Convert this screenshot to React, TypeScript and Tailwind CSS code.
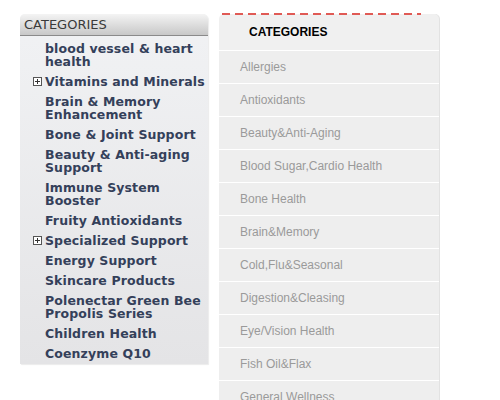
import React from "react";

const leftItems: { label: string; plus?: boolean }[] = [
  { label: "blood vessel & heart health" },
  { label: "Vitamins and Minerals", plus: true },
  { label: "Brain & Memory Enhancement" },
  { label: "Bone & Joint Support" },
  { label: "Beauty & Anti-aging Support" },
  { label: "Immune System Booster" },
  { label: "Fruity Antioxidants" },
  { label: "Specialized Support", plus: true },
  { label: "Energy Support" },
  { label: "Skincare Products" },
  { label: "Polenectar Green Bee Propolis Series" },
  { label: "Children Health" },
  { label: "Coenzyme Q10" },
];

const rightItems = [
  "Allergies",
  "Antioxidants",
  "Beauty&Anti-Aging",
  "Blood Sugar,Cardio Health",
  "Bone Health",
  "Brain&Memory",
  "Cold,Flu&Seasonal",
  "Digestion&Cleasing",
  "Eye/Vision Health",
  "Fish Oil&Flax",
  "General Wellness",
];

function PlusBox() {
  return (
    <svg width="9" height="9" viewBox="0 0 9 9" className="block">
      <rect x="0.5" y="0.5" width="8" height="8" fill="#fff" stroke="#555" />
      <line x1="2" y1="4.5" x2="7" y2="4.5" stroke="#333" />
      <line x1="4.5" y1="2" x2="4.5" y2="7" stroke="#333" />
    </svg>
  );
}

export default function App() {
  return (
    <div className="w-[500px] h-[400px] bg-white overflow-hidden relative">
      <div className="flex items-start pt-[14px]">
        {/* Left panel */}
        <div className="ml-[20px] w-[188px] rounded-t-[5px] bg-gradient-to-b from-[#f1f2f4] to-[#e4e4e6] shadow-[1px_1px_1px_rgba(0,0,0,0.08)] pb-[1px]">
          <div className="h-[22px] rounded-t-[5px] bg-gradient-to-b from-[#f4f4f4] to-[#c8c8c8] border-b border-[#8a8a8a] flex items-center pl-[4px]">
            <span className="text-[13px] leading-none text-[#3a3a3a] [font-family:'DejaVu_Sans',Tahoma,sans-serif]">
              CATEGORIES
            </span>
          </div>
          <ul className="pt-[2px]">
            {leftItems.map((it) => (
              <li key={it.label} className="flex items-start pt-[4px] pb-[3px]">
                <div className="w-[25px] shrink-0 flex justify-end pr-[3px] pt-[2px]">
                  {it.plus ? <PlusBox /> : null}
                </div>
                <span className="text-[12.5px] leading-[13px] font-bold text-[#34405a] [font-family:'DejaVu_Sans',Verdana,sans-serif] tracking-[0.12px]">
                  {it.label}
                </span>
              </li>
            ))}
          </ul>
        </div>

        {/* Right panel */}
        <div className="ml-[11px] -mt-[1px] w-[220px] flex flex-col">
          <div className="h-[2px] ml-[3px] w-[199px] flex gap-[5px] overflow-hidden -mb-[1px] relative z-10">
            {Array.from({ length: 16 }).map((_, i) => (
              <span key={i} className="block h-[2px] w-[8px] shrink-0 bg-[#e05a55]" />
            ))}
          </div>
          <div className="h-[36px] rounded-t-[5px] bg-[#f0f0f0] flex items-center pl-[30px] shadow-[1px_0_0_#e2e2e2]">
            <span className="text-[12px] font-bold text-black [font-family:'Liberation_Sans',Arial,sans-serif]">
              CATEGORIES
            </span>
          </div>
          <ul>
            {rightItems.map((r) => (
              <li
                key={r}
                className="h-[33px] bg-[#eeeeee] border-t border-white flex items-center pl-[21px] text-[12px] text-[#9a9a9a] shadow-[1px_0_0_#e2e2e2] [font-family:'Liberation_Sans',Arial,sans-serif]"
              >
                {r}
              </li>
            ))}
          </ul>
        </div>
      </div>
    </div>
  );
}
